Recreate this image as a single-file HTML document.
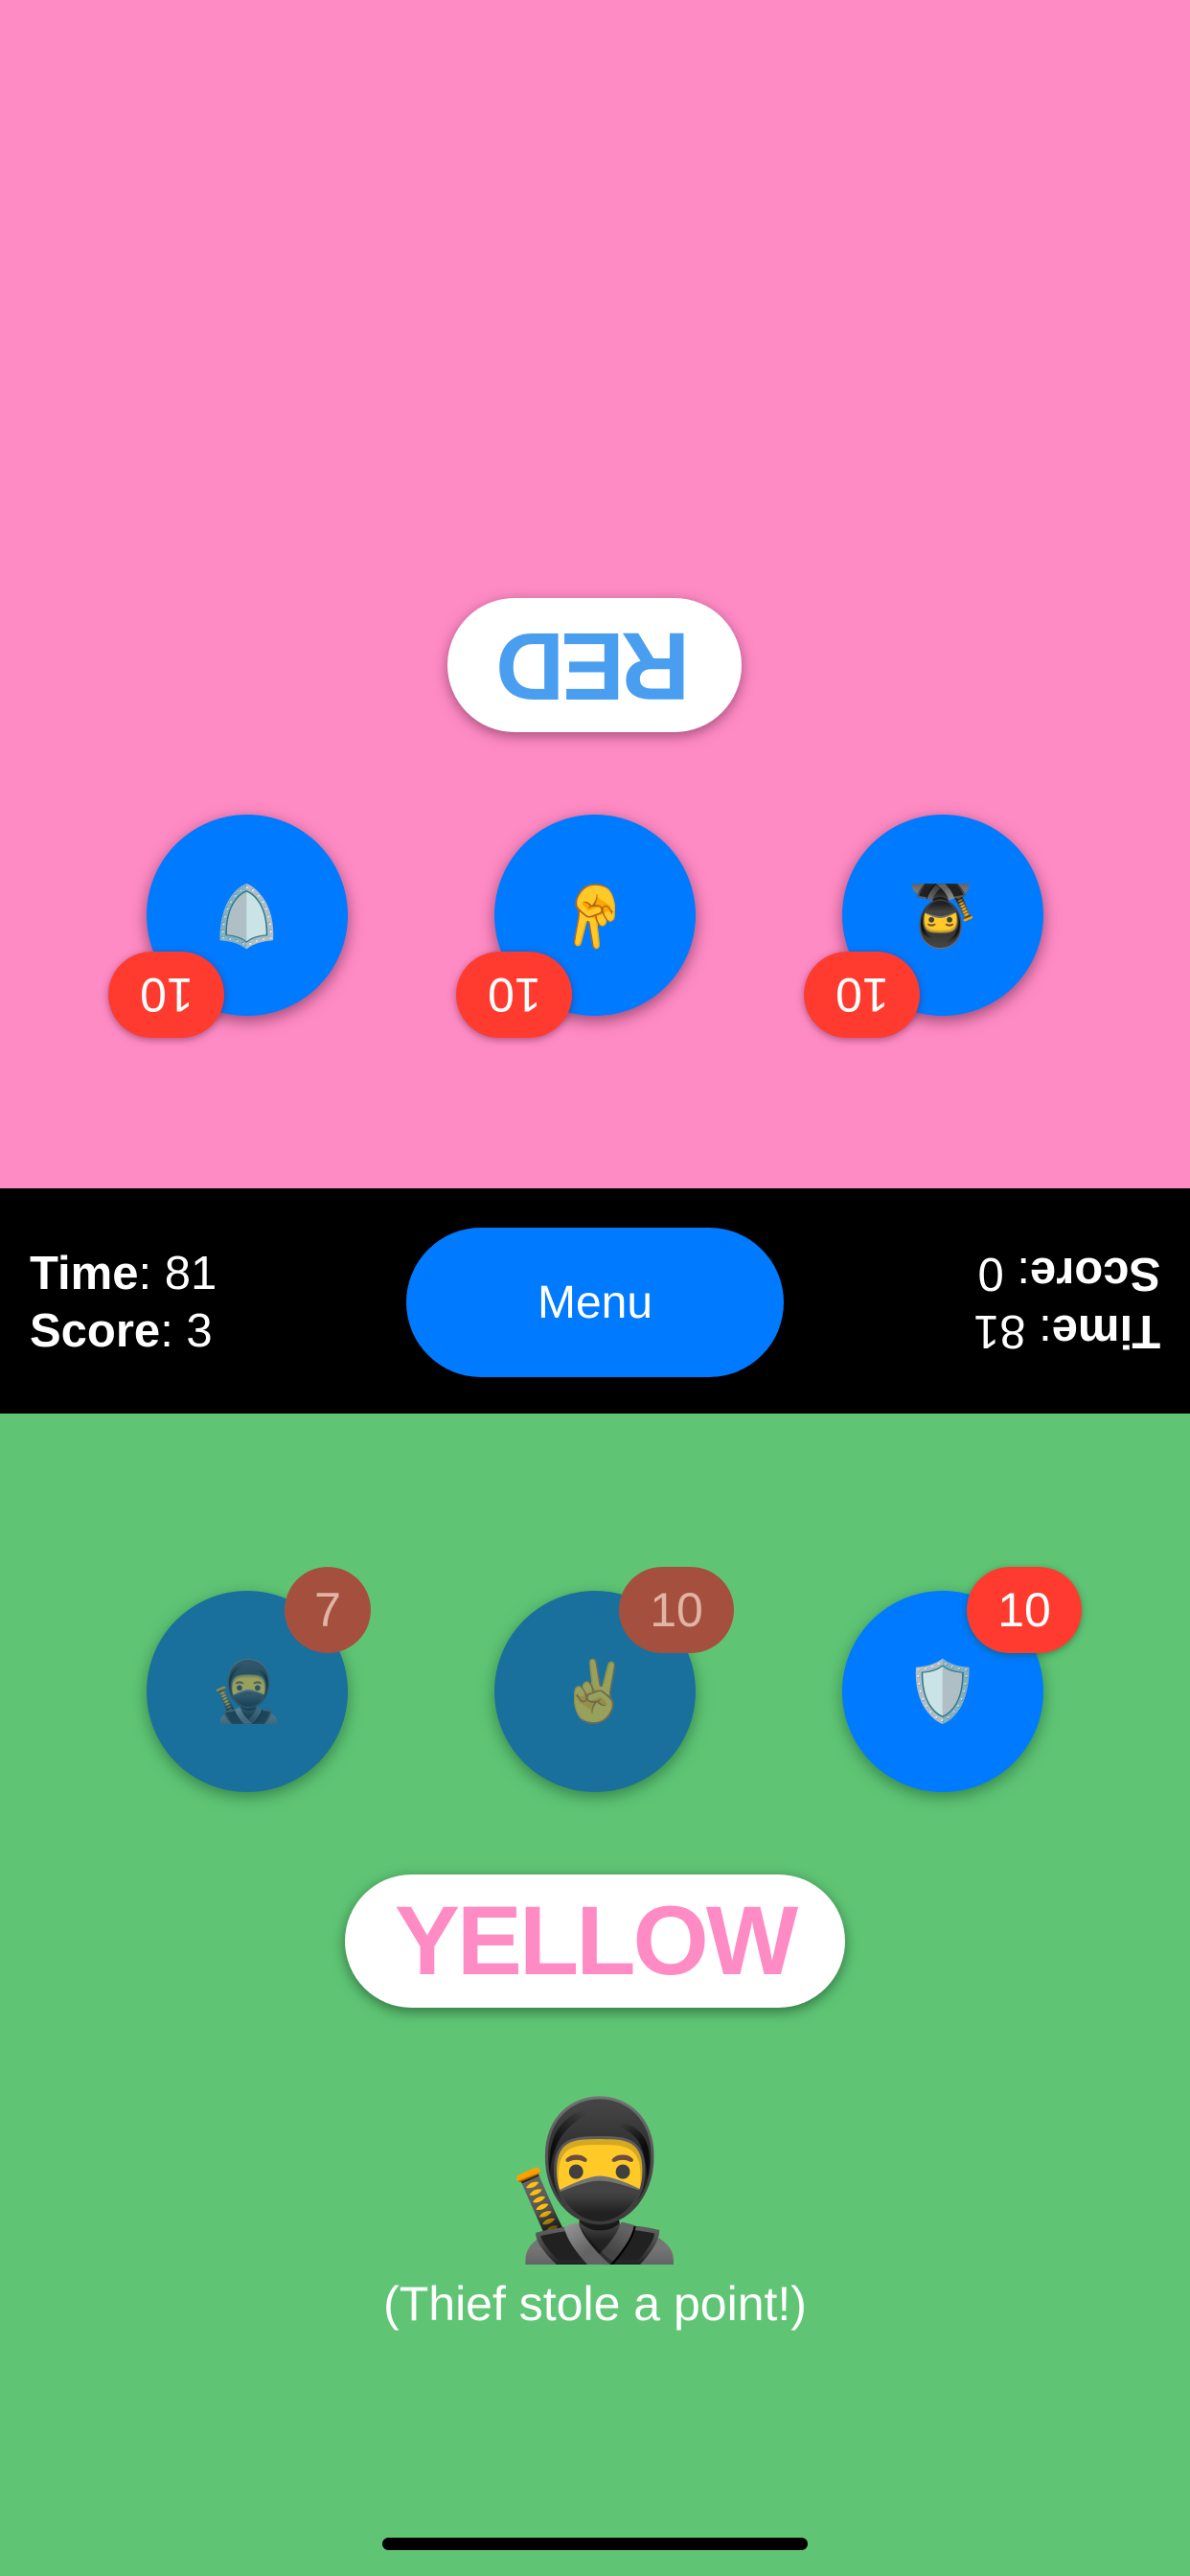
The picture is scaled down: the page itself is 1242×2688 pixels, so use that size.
<!DOCTYPE html>
<html><head><meta charset="utf-8"><style>
*{margin:0;padding:0;box-sizing:border-box}
body{width:1242px;height:2688px;position:relative;overflow:hidden;font-family:"Liberation Sans",sans-serif;background:#5FC575}
.pink{position:absolute;left:0;top:0;width:1242px;height:1240px;background:#FF8BC5}
.bar{position:absolute;left:0;top:1240px;width:1242px;height:235px;background:#000}
.pill{position:absolute;background:#fff;border-radius:80px;display:flex;align-items:center;justify-content:center;font-weight:bold}
.circ{position:absolute;width:210px;height:210px;border-radius:50%;background:#007AFF;display:flex;align-items:center;justify-content:center;font-size:62px}
.badge{position:absolute;height:90px;border-radius:45px;background:#FF3B30;color:#fff;font-size:50px;display:flex;align-items:center;justify-content:center}
.t{position:absolute;color:#fff;font-size:49px;line-height:60px}
</style></head><body>
<div class="pink"></div>
<div class="pill" style="left:467px;top:624px;width:307px;height:140px;color:#4A9EF0;font-size:100px;box-shadow:0 4px 14px rgba(90,30,60,.55)"><span style="transform:rotate(180deg);display:inline-block;letter-spacing:-4px">RED</span></div>

<div class="circ" style="left:153px;top:850px;box-shadow:0 5px 16px rgba(90,30,60,.6)"><span style="transform:rotate(180deg)">🛡️</span></div>
<div class="circ" style="left:516px;top:850px;box-shadow:0 5px 16px rgba(90,30,60,.6)"><span style="transform:rotate(180deg)">✌️</span></div>
<div class="circ" style="left:879px;top:850px;box-shadow:0 5px 16px rgba(90,30,60,.6)"><span style="transform:rotate(180deg)">🥷</span></div>
<div class="badge" style="left:113px;top:993px;width:121px;box-shadow:0 2px 8px rgba(90,30,60,.5)"><span style="transform:rotate(180deg)">10</span></div>
<div class="badge" style="left:476px;top:993px;width:121px;box-shadow:0 2px 8px rgba(90,30,60,.5)"><span style="transform:rotate(180deg)">10</span></div>
<div class="badge" style="left:839px;top:993px;width:121px;box-shadow:0 2px 8px rgba(90,30,60,.5)"><span style="transform:rotate(180deg)">10</span></div>

<div class="bar"></div>
<div class="t" style="left:31px;top:1299px"><b>Time</b>: 81<br><b>Score</b>: 3</div>
<div style="position:absolute;left:424px;top:1281px;width:394px;height:156px;border-radius:78px;background:#007AFF;color:#fff;font-size:48px;display:flex;align-items:center;justify-content:center">Menu</div>
<div class="t" style="right:31px;top:1299px;text-align:left;transform:rotate(180deg)"><b>Time</b>: 81<br><b>Score</b>: 0</div>

<div class="circ" style="left:153px;top:1660px;background:#19709C;box-shadow:0 5px 16px rgba(20,80,40,.55)"><span style="opacity:.55">🥷</span></div>
<div class="circ" style="left:516px;top:1660px;background:#19709C;box-shadow:0 5px 16px rgba(20,80,40,.55)"><span style="opacity:.55">✌️</span></div>
<div class="circ" style="left:879px;top:1660px;box-shadow:0 5px 16px rgba(20,80,40,.55)">🛡️</div>
<div class="badge" style="left:297px;top:1635px;width:90px;background:#A5503E;color:#E0B5A5">7</div>
<div class="badge" style="left:646px;top:1635px;width:120px;background:#A5503E;color:#E0B5A5">10</div>
<div class="badge" style="left:1009px;top:1635px;width:120px;box-shadow:0 2px 8px rgba(20,80,40,.5)">10</div>

<div class="pill" style="left:360px;top:1956px;width:522px;height:139px;color:#FF8BC5;font-size:102px;letter-spacing:-3px;box-shadow:0 4px 14px rgba(20,60,30,.6)">YELLOW</div>
<div style="position:absolute;left:521px;top:2180px;width:200px;text-align:center;font-size:160px;line-height:190px">🥷</div>
<div style="position:absolute;left:0;top:2375px;width:1242px;text-align:center;color:#fff;font-size:50px">(Thief stole a point!)</div>
<div style="position:absolute;left:399px;top:2648px;width:444px;height:13px;border-radius:7px;background:#000"></div>
</body></html>
